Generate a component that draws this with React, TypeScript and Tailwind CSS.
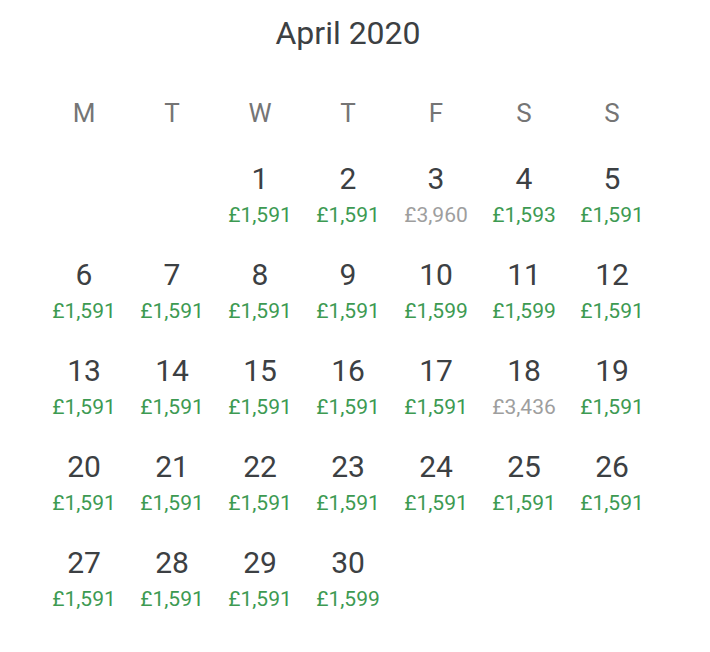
const weekdays = ['M', 'T', 'W', 'T', 'F', 'S', 'S'];

type Day = { day: number; price: string; cheap: boolean };

const prices: Record<number, string> = {
  3: '£3,960',
  4: '£1,593',
  10: '£1,599',
  11: '£1,599',
  18: '£3,436',
  30: '£1,599',
};
const expensive = new Set([3, 18]);

const days: (Day | null)[] = [null, null];
for (let d = 1; d <= 30; d++) {
  days.push({ day: d, price: prices[d] ?? '£1,591', cheap: !expensive.has(d) });
}

export default function App() {
  return (
    <div className="min-h-screen bg-white font-['Roboto',sans-serif]">
      <div className="ml-10 w-[616px]">
        <h1 className="pt-[13px] text-center text-[32px] leading-[40px] text-[#3c4043]">April 2020</h1>
        <div className="mt-[46px] grid grid-cols-7">
          {weekdays.map((w, i) => (
            <div key={i} className="text-center text-[26px] leading-[28px] text-[#757575]">
              {w}
            </div>
          ))}
        </div>
        <div className="mt-[34px] grid grid-cols-7 gap-y-[30px]">
          {days.map((d, i) =>
            d ? (
              <div key={i} className="flex flex-col items-center">
                <span className="text-[30px] leading-[36px] text-[#3c4043]">{d.day}</span>
                <span
                  className={
                    'mt-[6px] text-[21px] leading-[24px] ' +
                    (d.cheap ? 'text-[#3d9a52]' : 'text-[#9e9e9e]')
                  }
                >
                  {d.price}
                </span>
              </div>
            ) : (
              <div key={i} />
            )
          )}
        </div>
      </div>
    </div>
  );
}
